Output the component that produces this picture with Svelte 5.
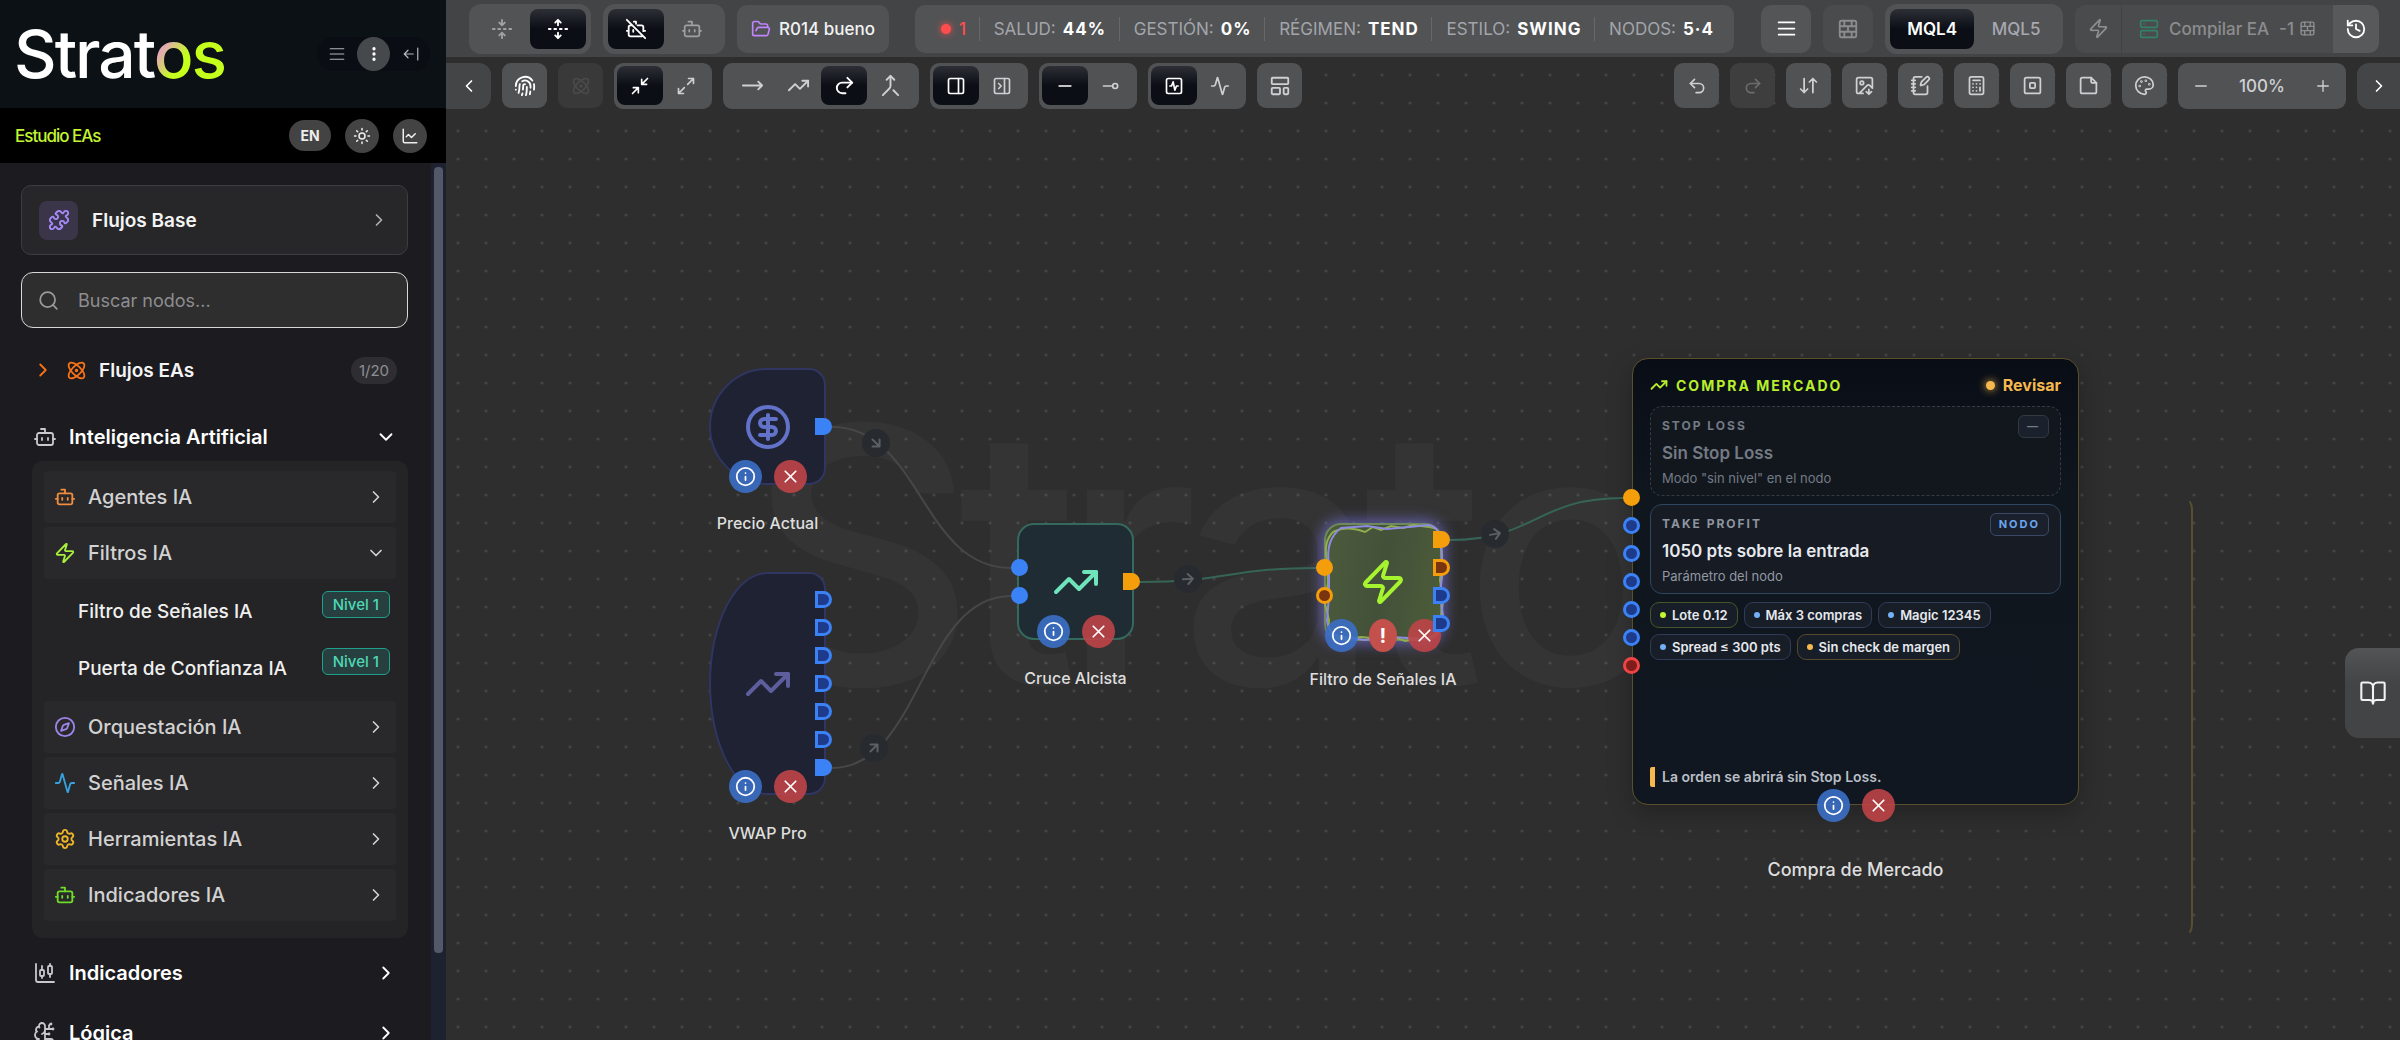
<script>
    const icons = {
        menu: '<path d="M3 5h18M3 12h18M3 19h18"/>',
        kebab: '<circle cx="12" cy="5" r="1"/><circle cx="12" cy="12" r="1"/><circle cx="12" cy="19" r="1"/>',
        collapse: '<path d="m8 7-5 5 5 5M3 12h12M21 4v16"/>',
        sun: '<circle cx="12" cy="12" r="4"/><path d="M12 2v2M12 20v2M4.9 4.9l1.4 1.4M17.7 17.7l1.4 1.4M2 12h2M20 12h2M6.3 17.7l-1.4 1.4M19.1 4.9l-1.4 1.4"/>',
        chart: '<path d="M3 3v16a2 2 0 0 0 2 2h16M19 9l-5 5-4-4-3 3"/>',
        puzzle: '<path d="M15.39 4.39a1 1 0 0 0 1.68-.474 2.5 2.5 0 1 1 3.014 3.015 1 1 0 0 0-.474 1.68l1.683 1.682a2.414 2.414 0 0 1 0 3.414L19.61 15.39a1 1 0 0 1-1.68-.474 2.5 2.5 0 1 0-3.014 3.015 1 1 0 0 1 .474 1.68l-1.683 1.682a2.414 2.414 0 0 1-3.414 0L8.61 19.61a1 1 0 0 0-1.68.474 2.5 2.5 0 1 1-3.014-3.015 1 1 0 0 0 .474-1.68l-1.683-1.682a2.414 2.414 0 0 1 0-3.414L4.39 8.61a1 1 0 0 1 1.68.474 2.5 2.5 0 1 0 3.014-3.015 1 1 0 0 1-.474-1.68l1.683-1.682a2.414 2.414 0 0 1 3.414 0z"/>',
        search: '<circle cx="11" cy="11" r="8.5"/><path d="m21.5 21.5-4.5-4.5"/>',
        right: '<path d="m9 18 6-6-6-6"/>',
        left: '<path d="m15 18-6-6 6-6"/>',
        down: '<path d="m6 9 6 6 6-6"/>',
        atom: '<circle cx="12" cy="12" r="1"/><path d="M20.2 20.2c2.04-2.03.02-7.36-4.5-11.9-4.54-4.52-9.87-6.54-11.9-4.5-2.04 2.03-.02 7.36 4.5 11.9 4.54 4.52 9.87 6.54 11.9 4.5Z"/><path d="M15.7 15.7c4.52-4.54 6.54-9.87 4.5-11.9-2.03-2.04-7.36-.02-11.9 4.5-4.52 4.54-6.54 9.87-4.5 11.9 2.03 2.04 7.36.02 11.9-4.5Z"/>',
        bot: '<path d="M12 8V4H8"/><rect width="16" height="12" x="4" y="8" rx="2"/><path d="M2 14h2M20 14h2M15 13v2M9 13v2"/>',
        botOff: '<path d="M13.67 8H18a2 2 0 0 1 2 2v4.33M2 14h2M20 14h2M22 22 2 2M8 8H6a2 2 0 0 0-2 2v8a2 2 0 0 0 2 2h12a2 2 0 0 0 1.414-.586M9 13v2M9.67 4H12v2.33"/>',
        zap: '<path d="M4 14a1 1 0 0 1-.78-1.63l9.9-10.2a.5.5 0 0 1 .86.46l-1.92 6.02A1 1 0 0 0 13 10h7a1 1 0 0 1 .78 1.63l-9.9 10.2a.5.5 0 0 1-.86-.46l1.92-6.02A1 1 0 0 0 11 14z"/>',
        compass: '<circle cx="12" cy="12" r="10"/><path d="m16.24 7.76-1.804 5.411a2 2 0 0 1-1.265 1.265L7.76 16.24l1.804-5.411a2 2 0 0 1 1.265-1.265z"/>',
        activity: '<path d="M22 12h-2.48a2 2 0 0 0-1.93 1.46l-2.35 8.36a.25.25 0 0 1-.48 0L9.24 2.18a.25.25 0 0 0-.48 0l-2.35 8.36A2 2 0 0 1 4.49 12H2"/>',
        settings: '<path d="M9.671 4.136a2.34 2.34 0 0 1 4.659 0 2.34 2.34 0 0 0 3.319 1.915 2.34 2.34 0 0 1 2.33 4.033 2.34 2.34 0 0 0 0 3.831 2.34 2.34 0 0 1-2.33 4.033 2.34 2.34 0 0 0-3.319 1.915 2.34 2.34 0 0 1-4.659 0 2.34 2.34 0 0 0-3.32-1.915 2.34 2.34 0 0 1-2.33-4.033 2.34 2.34 0 0 0 0-3.831A2.34 2.34 0 0 1 6.35 6.051a2.34 2.34 0 0 0 3.319-1.915"/><circle cx="12" cy="12" r="3"/>',
        candles: '<path d="M9 5v4M9 15v2M17 3v2M17 13v3M3 3v16a2 2 0 0 0 2 2h16"/><rect width="4" height="6" x="7" y="9" rx="1"/><rect width="4" height="8" x="15" y="5" rx="1"/>',
        brain: '<path d="M12 5a3 3 0 1 0-5.997.125 4 4 0 0 0-2.526 5.77 4 4 0 0 0 .556 6.588A4 4 0 1 0 12 18ZM9 13a4.5 4.5 0 0 0 3-4M6.003 5.125A3 3 0 0 0 6.401 6.5M3.477 10.896a4 4 0 0 1 .585-.396M6 18a4 4 0 0 1-1.967-.516M12 13h4M12 18h6a2 2 0 0 1 2 2v1M12 8h8M16 8V5a2 2 0 0 1 2-2"/><circle cx="16" cy="13" r=".5"/><circle cx="18" cy="3" r=".5"/><circle cx="20" cy="21" r=".5"/><circle cx="20" cy="8" r=".5"/>',
        fold: '<path d="M12 22v-6M12 8V2M4 12H2M10 12H8M16 12h-2M22 12h-2M15 19l-3-3-3 3M15 5l-3 3-3-3"/>',
        unfold: '<path d="M12 22v-6M12 8V2M4 12H2M10 12H8M16 12h-2M22 12h-2M15 19l-3 3-3-3M15 5l-3-3-3 3"/>',
        folder: '<path d="m6 14 1.5-2.9A2 2 0 0 1 9.24 10H20a2 2 0 0 1 1.94 2.5l-1.54 6a2 2 0 0 1-1.95 1.5H4a2 2 0 0 1-2-2V5a2 2 0 0 1 2-2h3.9a2 2 0 0 1 1.69.9l.81 1.2a2 2 0 0 0 1.67.9H18a2 2 0 0 1 2 2v2"/>',
        finger: '<path d="M12 10a2 2 0 0 0-2 2c0 1.02-.1 2.51-.26 4M14 13.12c0 2.38 0 6.38-1 8.88M17.29 21.02c.12-.6.43-2.3.5-3.02M2 12a10 10 0 0 1 18-6M2 16h.01M21.8 16c.2-2 .131-5.354 0-6M5 19.5C5.5 18 6 15 6 12a6 6 0 0 1 .34-2M8.65 22c.21-.66.45-1.32.57-2M9 6.8a6 6 0 0 1 9 5.2v2"/>',
        shrink: '<path d="m14 10 7-7M20 10h-6V4M3 21l7-7M4 14h6v6"/>',
        grow: '<path d="M15 3h6v6M21 3l-7 7M3 21l7-7M9 21H3v-6"/>',
        arrow: '<path d="m18 8 4 4-4 4M2 12h20"/>',
        trend: '<path d="M16 7h6v6"/><path d="m22 7-8.5 8.5-5-5L2 17"/>',
        redo: '<path d="m15 14 5-5-5-5"/><path d="M20 9H9.5a5.5 5.5 0 0 0 0 11H13"/>',
        undo: '<path d="M9 14 4 9l5-5"/><path d="M4 9h10.5a5.5 5.5 0 0 1 0 11H11"/>',
        merge: '<path d="m8 6 4-4 4 4"/><path d="M12 2v10.3a4 4 0 0 1-1.172 2.872L4 22M20 22l-5-5"/>',
        panel: '<rect width="18" height="18" x="3" y="3" rx="2"/><path d="M15 3v18"/>',
        panelClose: '<rect width="18" height="18" x="3" y="3" rx="2"/><path d="M15 3v18M8 9l3 3-3 3"/>',
        minus: '<path d="M5 12h14"/>',
        plus: '<path d="M5 12h14M12 5v14"/>',
        port: '<path d="M3 12h11"/><circle cx="17" cy="12" r="3"/>',
        pulse: '<rect width="18" height="18" x="3" y="3" rx="2"/><path d="M17 12h-2l-2 5-2-10-2 5H7"/>',
        layout: '<rect width="18" height="7" x="3" y="3" rx="1"/><rect width="9" height="7" x="3" y="14" rx="1"/><rect width="5" height="7" x="16" y="14" rx="1"/>',
        bricks: '<rect width="18" height="18" x="3" y="3" rx="2"/><path d="M12 9v6M16 15v6M16 3v6M3 15h18M3 9h18M8 15v6M8 3v6"/>',
        server: '<rect width="20" height="8" x="2" y="2" rx="2"/><rect width="20" height="8" x="2" y="14" rx="2"/><path d="M6 6h.01M6 18h.01"/>',
        history: '<path d="M3 12a9 9 0 1 0 9-9 9.75 9.75 0 0 0-6.74 2.74L3 8"/><path d="M3 3v5h5M12 7v5l4 2"/>',
        sort: '<path d="m3 16 4 4 4-4M7 20V4M21 8l-4-4-4 4M17 4v16"/>',
        image: '<path d="M10.3 21H5a2 2 0 0 1-2-2V5a2 2 0 0 1 2-2h14a2 2 0 0 1 2 2v10l-3.1-3.1a2 2 0 0 0-2.814.014L6 21"/><path d="m14 19 3 3v-5.5M17 22l3-3"/><circle cx="9" cy="9" r="2"/>',
        note: '<path d="M13.4 2H6a2 2 0 0 0-2 2v16a2 2 0 0 0 2 2h12a2 2 0 0 0 2-2v-7.4M2 6h4M2 10h4M2 14h4M2 18h4"/><path d="M21.378 5.626a1 1 0 1 0-3.004-3.004l-5.01 5.012a2 2 0 0 0-.506.854l-.837 2.87a.5.5 0 0 0 .62.62l2.87-.837a2 2 0 0 0 .854-.506z"/>',
        calc: '<rect width="16" height="20" x="4" y="2" rx="2"/><path d="M8 6h8M16 14v4M16 10h.01M12 10h.01M8 10h.01M12 14h.01M8 14h.01M12 18h.01M8 18h.01"/>',
        frame: '<rect width="18" height="18" x="3" y="3" rx="2"/><rect width="6" height="6" x="9" y="9" rx="1"/>',
        sticky: '<path d="M15 3H5a2 2 0 0 0-2 2v14a2 2 0 0 0 2 2h14a2 2 0 0 0 2-2V9Z"/><path d="M15 3v4a2 2 0 0 0 2 2h4"/>',
        palette: '<path d="M12 22a1 1 0 0 1 0-20 10 9 0 0 1 10 9 5 5 0 0 1-5 5h-2.25a1.75 1.75 0 0 0-1.4 2.8l.3.4a1.75 1.75 0 0 1-1.4 2.8z"/><circle cx="13.5" cy="6.5" r=".5"/><circle cx="17.5" cy="10.5" r=".5"/><circle cx="6.5" cy="12.5" r=".5"/><circle cx="8.5" cy="7.5" r=".5"/>',
        info: '<circle cx="12" cy="12" r="10"/><path d="M12 16v-4M12 8h.01"/>',
        close: '<path d="M18 6 6 18M6 6l12 12"/>',
        dollar: '<circle cx="12" cy="12" r="10"/><path d="M16 8h-6a2 2 0 1 0 0 4h4a2 2 0 1 1 0 4H8M12 18V6"/>',
        book: '<path d="M12 7v14"/><path d="M3 18a1 1 0 0 1-1-1V4a1 1 0 0 1 1-1h5a4 4 0 0 1 4 4 4 4 0 0 1 4-4h5a1 1 0 0 1 1 1v13a1 1 0 0 1-1 1h-6a3 3 0 0 0-3 3 3 3 0 0 0-3-3z"/>'
    };

    const categories = [
        { name: "Agentes IA", icon: "bot", tone: "orange" },
        { name: "Filtros IA", icon: "zap", tone: "lime", items: ["Filtro de Señales IA", "Puerta de Confianza IA"] },
        { name: "Orquestación IA", icon: "compass", tone: "violet" },
        { name: "Señales IA", icon: "activity", tone: "sky" },
        { name: "Herramientas IA", icon: "settings", tone: "amber" },
        { name: "Indicadores IA", icon: "bot", tone: "green" }
    ];

    const stats = [
        { label: "SALUD:", value: "44%" },
        { label: "GESTIÓN:", value: "0%" },
        { label: "RÉGIMEN:", value: "TEND" },
        { label: "ESTILO:", value: "SWING" },
        { label: "NODOS:", value: "5·4" }
    ];

    const viewGroups = [
        { active: 0, icons: ["shrink", "grow"] },
        { active: 2, icons: ["arrow", "trend", "redo", "merge"], wide: true },
        { active: 0, icons: ["panel", "panelClose"] },
        { active: 0, icons: ["minus", "port"] },
        { active: 0, icons: ["pulse", "activity"] }
    ];

    const tools = ["sort", "image", "note", "calc", "frame", "sticky", "palette"];

    // canvas coordinates, origin at the canvas' top left corner
    const nodes = [
        { name: "Precio Actual", kind: "source", icon: "dollar", x: 263, y: 311, w: 117, h: 117 },
        { name: "VWAP Pro", kind: "source faded", icon: "trend", x: 263, y: 515, w: 117, h: 223 },
        { name: "Cruce Alcista", kind: "cross", icon: "trend", x: 571, y: 466, w: 117, h: 117 },
        { name: "Filtro de Señales IA", kind: "filter", icon: "zap", x: 878, y: 466, w: 118, h: 118, alert: true }
    ];

    const ports = [
        { x: 369, y: 361, c: "out blue full" },
        ...[534, 562, 590, 618, 646, 674].map(y => ({ x: 369, y, c: "out blue" })),
        { x: 369, y: 702, c: "out blue full" },
        { x: 565, y: 502, c: "blue full" },
        { x: 565, y: 530, c: "blue full" },
        { x: 677, y: 516, c: "out gold full" },
        { x: 870, y: 502, c: "gold full" },
        { x: 870, y: 530, c: "gold" },
        { x: 987, y: 474, c: "out gold full" },
        { x: 987, y: 502, c: "out gold" },
        { x: 987, y: 530, c: "out blue" },
        { x: 987, y: 558, c: "out blue" },
        { x: 1177, y: 432, c: "gold full" },
        ...[460, 488, 516, 544, 572].map(y => ({ x: 1177, y, c: "blue" })),
        { x: 1177, y: 600, c: "red" }
    ];

    const edges = [
        { d: "M386 370C475 370 475 511 565 511", c: "plain", x: 430, y: 386, turn: 45 },
        { d: "M386 711C475 711 475 539 565 539", c: "plain", x: 428, y: 691, turn: -45 },
        { d: "M694 525C782 525 782 511 870 511", c: "live", x: 742, y: 522, turn: -4 },
        { d: "M1004 483C1090 483 1090 441 1177 441", c: "live", x: 1049, y: 477, turn: -10 }
    ];

    const chips = [
        { text: "Lote 0.12", tone: "lime" },
        { text: "Máx 3 compras", tone: "blue" },
        { text: "Magic 12345", tone: "blue" },
        { text: "Spread ≤ 300 pts", tone: "blue" },
        { text: "Sin check de margen", tone: "gold" }
    ];
</script>

{#snippet icon(name, size = 20, stroke = 2)}
    <svg class="icon" width={size} height={size} viewBox="0 0 24 24" stroke-width={stroke} aria-hidden="true">{@html icons[name]}</svg>
{/snippet}

{#snippet actions(alert)}
    <div class="actions">
        <button class="round info" aria-label="Información">{@render icon("info", 21)}</button>
        {#if alert}
            <button class="round alert" aria-label="Aviso">!</button>
        {/if}
        <button class="round remove" aria-label="Eliminar">{@render icon("close", 21)}</button>
    </div>
{/snippet}

<div class="app">
    <aside class="sidebar">
        <header class="brand">
            <h1 class="logo">Strat<span>os</span></h1>
            <div class="brand-actions">
                <button aria-label="Menú">{@render icon("menu", 18, 1.6)}</button>
                <button class="on" aria-label="Opciones">{@render icon("kebab", 18, 2.4)}</button>
                <button aria-label="Contraer">{@render icon("collapse", 18, 1.6)}</button>
            </div>
        </header>

        <div class="studio">
            <span class="studio-name">Estudio EAs</span>
            <div class="studio-actions">
                <button class="lang">EN</button>
                <button aria-label="Tema">{@render icon("sun", 18)}</button>
                <button aria-label="Gráfico">{@render icon("chart", 18)}</button>
            </div>
        </div>

        <div class="scroller">
            <nav class="nav">
                <button class="base">
                    <span class="base-icon">{@render icon("puzzle", 22)}</span>
                    <span class="grow">Flujos Base</span>
                    {@render icon("right", 20)}
                </button>

                <label class="search">
                    {@render icon("search", 21, 2)}
                    <input type="text" placeholder="Buscar nodos..." aria-label="Buscar nodos" />
                </label>

                <button class="flows">
                    {@render icon("right", 22)}
                    {@render icon("atom", 21)}
                    <span class="grow">Flujos EAs</span>
                    <span class="count">1/20</span>
                </button>

                <button class="section">
                    {@render icon("bot", 24, 1.8)}
                    <span class="grow">Inteligencia Artificial</span>
                    {@render icon("down", 22)}
                </button>

                <div class="panel">
                    {#each categories as cat}
                        <button class="category">
                            <span class="tone {cat.tone}">{@render icon(cat.icon, 22)}</span>
                            <span class="grow">{cat.name}</span>
                            {@render icon(cat.items ? "down" : "right", 20)}
                        </button>
                        {#if cat.items}
                            <div class="leafs">
                                {#each cat.items as item}
                                    <button class="leaf">
                                        <span class="grow">{item}</span>
                                        <span class="level">Nivel 1</span>
                                    </button>
                                {/each}
                            </div>
                        {/if}
                    {/each}
                </div>

                <button class="section">
                    {@render icon("candles", 24, 1.8)}
                    <span class="grow">Indicadores</span>
                    {@render icon("right", 22)}
                </button>
                <button class="section">
                    {@render icon("brain", 24, 1.8)}
                    <span class="grow">Lógica</span>
                    {@render icon("right", 22)}
                </button>
            </nav>
            <div class="track"><div class="thumb"></div></div>
        </div>
    </aside>

    <main class="main">
        <header class="topbar">
            <div class="toggle">
                <button aria-label="Plegar">{@render icon("fold", 22)}</button>
                <button class="on" aria-label="Desplegar">{@render icon("unfold", 22)}</button>
            </div>
            <div class="toggle">
                <button class="on" aria-label="Sin asistente">{@render icon("botOff", 22)}</button>
                <button aria-label="Asistente">{@render icon("bot", 22, 1.8)}</button>
            </div>
            <button class="project">{@render icon("folder", 20)} R014 bueno</button>

            <div class="status">
                <span class="errors"><i></i>1</span>
                {#each stats as stat}
                    <span class="stat">{stat.label} <b>{stat.value}</b></span>
                {/each}
            </div>

            <button class="single" aria-label="Lista">{@render icon("menu", 21)}</button>
            <button class="single dim" aria-label="Bloques">{@render icon("bricks", 22)}</button>
            <div class="toggle platform">
                <button class="on">MQL4</button>
                <button>MQL5</button>
            </div>
            <div class="compile">
                <button class="quick" aria-label="Rápido">{@render icon("zap", 21)}</button>
                <button class="build">
                    <span class="server">{@render icon("server", 20)}</span>
                    Compilar EA
                    <span class="cost">-1 {@render icon("bricks", 17)}</span>
                </button>
                <button class="past" aria-label="Historial">{@render icon("history", 22)}</button>
            </div>
        </header>

        <section class="canvas">
            <div class="watermark" aria-hidden="true">Stratos</div>

            <svg class="edges" aria-hidden="true">
                {#each edges as edge}
                    <path class={edge.c} d={edge.d} />
                    <g transform="translate({edge.x} {edge.y}) rotate({edge.turn})">
                        <circle r="14" />
                        <path class="tip" d="M-5 0H5M0-5 5 0 0 5" />
                    </g>
                {/each}
                <path class="ghost" d="M1744 445Q1746 448 1746 452V867Q1746 872 1744 875" />
            </svg>

            {#each nodes as node}
                <div
                    class="node {node.kind}"
                    style="left: {node.x}px; top: {node.y}px; width: {node.w}px; height: {node.h}px;">
                    {@render icon(node.icon, 48)}
                    {#if node.alert}
                        <svg class="spark" viewBox="0 0 125 125" aria-hidden="true">
                            <path class="lime" d="M6 40Q2 22 12 12 24 6 38 10L44 12 52 7 60 10 70 6 82 8 92 5 108 7Q120 8 120 20L121 42 119 60 122 80 120 100Q119 117 104 118L84 121 76 118 60 119 40 117 22 119Q6 117 8 100L4 84 7 62Z" />
                            <path class="purple" d="M8 44Q4 20 20 8L46 6 66 9 88 7 108 5Q121 9 120 24L122 50 119 72 122 96Q120 116 104 119L70 117 44 120 22 117Q7 115 6 100L8 76Z" />
                        </svg>
                    {/if}
                    {@render actions(node.alert)}
                    <span class="node-name">{node.name}</span>
                </div>
            {/each}

            <article class="card">
                <header class="card-head">
                    <span class="card-title">{@render icon("trend", 18, 2.4)} COMPRA MERCADO</span>
                    <span class="review"><i></i>Revisar</span>
                </header>
                <div class="level-box off">
                    <div class="level-head"><span>STOP LOSS</span><span class="tag">—</span></div>
                    <strong>Sin Stop Loss</strong>
                    <small>Modo "sin nivel" en el nodo</small>
                </div>
                <div class="level-box">
                    <div class="level-head"><span>TAKE PROFIT</span><span class="tag">NODO</span></div>
                    <strong>1050 pts sobre la entrada</strong>
                    <small>Parámetro del nodo</small>
                </div>
                <div class="chips">
                    {#each chips as chip}
                        <span class="chip {chip.tone}"><i></i>{chip.text}</span>
                    {/each}
                </div>
                <p class="warning">La orden se abrirá sin Stop Loss.</p>
                {@render actions(false)}
                <span class="node-name">Compra de Mercado</span>
            </article>

            {#each ports as port}
                <span class="port {port.c}" style="left: {port.x}px; top: {port.y}px;"></span>
            {/each}

            <div class="toolbar">
                <button class="edge-tab start" aria-label="Anterior">{@render icon("left", 20)}</button>
                <button class="tool bright" aria-label="Identidad">{@render icon("finger", 22)}</button>
                <button class="tool ghosted" aria-label="Átomo">{@render icon("atom", 20)}</button>
                {#each viewGroups as group}
                    <div class="segment" class:wide={group.wide}>
                        {#each group.icons as name, i}
                            <button class:on={i === group.active} aria-label={name}>
                                {@render icon(name, group.wide ? 23 : 20)}
                            </button>
                        {/each}
                    </div>
                {/each}
                <button class="tool" aria-label="Distribución">{@render icon("layout", 22)}</button>

                <button class="tool push" aria-label="Deshacer">{@render icon("undo", 20)}</button>
                <button class="tool ghosted redo" aria-label="Rehacer">{@render icon("redo", 20)}</button>
                {#each tools as tool}
                    <button class="tool" aria-label={tool}>{@render icon(tool, 21)}</button>
                {/each}
                <div class="zoom">
                    <button aria-label="Alejar">{@render icon("minus", 18, 1.8)}</button>
                    <span>100%</span>
                    <button aria-label="Acercar">{@render icon("plus", 18, 1.8)}</button>
                </div>
                <button class="edge-tab end" aria-label="Siguiente">{@render icon("right", 20)}</button>
            </div>

            <button class="guide" aria-label="Guía">{@render icon("book", 28, 1.8)}</button>
        </section>
    </main>
</div>

<style>
    :global(body) {
        background: #2e2e2e;
        font-family: Inter, "Liberation Sans", sans-serif;
    }

    button {
        display: flex;
        align-items: center;
        justify-content: center;
        margin: 0;
        padding: 0;
        border: 0;
        background: none;
        color: inherit;
        font: inherit;
        cursor: pointer;
    }

    .icon {
        display: block;
        flex: none;
        fill: none;
        stroke: currentColor;
        stroke-linecap: round;
        stroke-linejoin: round;
    }

    .grow {
        flex: 1;
        text-align: left;
    }

    .app {
        display: flex;
        height: 100vh;
        overflow: hidden;
    }

    /* sidebar */
    .sidebar {
        display: flex;
        flex: none;
        flex-direction: column;
        width: 446px;
        background: #1b1b20;
        color: #fff;
    }

    .brand {
        display: flex;
        flex: none;
        align-items: center;
        justify-content: space-between;
        height: 108px;
        padding: 0 16px 0 14px;
        background: #0c1116;
    }

    .logo {
        margin: 0;
        font-size: 66px;
        font-weight: 500;
        letter-spacing: -2px;
        line-height: 80px;
    }

    .logo span {
        background: linear-gradient(125deg, #e3a9b4 26%, #c5ff1c 48%);
        background-clip: text;
        color: transparent;
    }

    .brand-actions {
        display: flex;
        gap: 4px;
        padding: 0 3px;
        border-radius: 20px;
        background: #0a0d13;
        color: #b4b8bc;
    }

    .brand-actions button {
        width: 33px;
        height: 34px;
        border-radius: 50%;
    }

    .brand-actions .on {
        background: #45494c;
        color: #fff;
    }

    .studio {
        display: flex;
        flex: none;
        align-items: center;
        justify-content: space-between;
        height: 55px;
        padding: 0 19px 0 15px;
        background: #000;
    }

    .studio-name {
        color: #c3f531;
        font-size: 17px;
        font-weight: 500;
        letter-spacing: -1px;
    }

    .studio-actions {
        display: flex;
        align-items: center;
        gap: 14px;
    }

    .studio-actions button {
        width: 34px;
        height: 34px;
        border-radius: 17px;
        background: #434343;
        color: #eee;
    }

    .studio-actions .lang {
        width: 42px;
        height: 31px;
        font-size: 14px;
        font-weight: 700;
    }

    .scroller {
        display: flex;
        flex: 1;
        min-height: 0;
    }

    .nav {
        flex: 1;
        padding: 22px 23px 0 21px;
        overflow: hidden;
    }

    .track {
        width: 15px;
        padding-top: 4px;
        background: #1d2130;
    }

    .thumb {
        width: 9px;
        height: 90%;
        margin: 0 auto;
        border-radius: 4px;
        background: #545868;
    }

    .base {
        width: 100%;
        height: 70px;
        gap: 14px;
        padding: 0 18px 0 17px;
        border: 1px solid #3d3d40;
        border-radius: 10px;
        background: #272729;
        color: #b0b0b0;
        font-size: 19px;
        font-weight: 600;
    }

    .base .grow {
        color: #f4f4f4;
    }

    .base-icon {
        display: grid;
        place-items: center;
        width: 39px;
        height: 39px;
        border-radius: 8px;
        background: #3b3549;
        color: #a78bfa;
    }

    .search {
        display: flex;
        align-items: center;
        gap: 19px;
        height: 54px;
        margin-top: 17px;
        padding: 0 17px 0 16px;
        border: 1px solid #d8d8d8;
        border-radius: 12px;
        background: #2e2e2e;
        color: #9a9a9a;
    }

    .search input {
        flex: 1;
        min-width: 0;
        padding: 0;
        border: 0;
        outline: 0;
        background: none;
        color: #fff;
        font: inherit;
        font-size: 18px;
    }

    .search input::placeholder {
        color: #8d8d90;
    }

    .flows {
        width: 100%;
        height: 44px;
        gap: 12px;
        margin-top: 20px;
        padding: 0 11px;
        color: #f97316;
        font-size: 19px;
        font-weight: 600;
    }

    .flows .grow {
        color: #f4f4f4;
    }

    .count {
        padding: 0 8px;
        border-radius: 14px;
        background: #2e2e32;
        color: #8f8f92;
        font-size: 15px;
        font-weight: 400;
        line-height: 27px;
    }

    .section {
        width: 100%;
        height: 60px;
        gap: 12px;
        padding: 0 11px 0 12px;
        font-size: 20px;
        font-weight: 600;
    }

    .section :global(.icon:first-child) {
        color: #c9c9cc;
    }

    .flows + .section {
        margin-top: 15px;
    }

    .panel {
        display: flex;
        flex-direction: column;
        gap: 4px;
        margin: -6px 0 5px 11px;
        padding: 10px 12px 17px;
        border-radius: 10px;
        background: #242426;
    }

    .category {
        height: 52px;
        gap: 12px;
        padding: 0 10px;
        border-radius: 4px;
        background: #29292b;
        color: #d2d2d2;
        font-size: 20px;
        font-weight: 500;
    }

    .leafs {
        display: flex;
        flex-direction: column;
        padding-left: 20px;
    }

    .leaf {
        height: 57px;
        padding: 0 6px 0 14px;
        color: #f0f0f0;
        font-size: 19px;
        font-weight: 500;
    }

    .level {
        align-self: flex-start;
        margin-top: 8px;
        padding: 0 10px;
        border: 1px solid #1fa08c;
        border-radius: 6px;
        background: #27403f;
        color: #4fd8b6;
        font-size: 15px;
        line-height: 25px;
    }

    .tone.orange { color: #f08c3c; }
    .tone.lime { color: #a8f03c; }
    .tone.violet { color: #9d84e8; }
    .tone.sky { color: #36a3e0; }
    .tone.amber { color: #f0b429; }
    .tone.green { color: #6fdc28; }

    /* top bar */
    .main {
        display: flex;
        flex: 1;
        flex-direction: column;
        min-width: 0;
    }

    .topbar {
        display: flex;
        flex: none;
        align-items: center;
        gap: 12px;
        height: 57px;
        padding: 0 21px 0 23px;
        background: #434445;
        color: #fff;
        font-size: 17px;
        font-weight: 500;
        white-space: nowrap;
    }

    .toggle {
        display: flex;
        padding: 5px;
        border-radius: 12px;
        background: #525355;
        color: #a0a1a3;
    }

    .toggle button {
        width: 56px;
        height: 40px;
        border-radius: 8px;
    }

    .toggle .on,
    .segment .on {
        background: linear-gradient(#2c3036, #0b0f15 50%);
        color: #fff;
    }

    .toggle.platform button {
        width: 84px;
        color: #a7a8b0;
    }

    .toggle.platform .on {
        color: #fff;
        font-weight: 600;
    }

    .project {
        height: 48px;
        gap: 8px;
        padding: 0 14px;
        border-radius: 10px;
        background: #515254;
        color: #f2f2f2;
    }

    .project :global(.icon) {
        color: #c084fc;
    }

    .status {
        display: flex;
        flex: 1;
        align-items: center;
        justify-content: space-between;
        height: 48px;
        margin: 0 15px 0 14px;
        padding: 0 20px 0 26px;
        border-radius: 10px;
        background: #525355;
    }

    .errors {
        display: flex;
        align-items: center;
        gap: 8px;
        color: #ff4d4d;
    }

    .errors i {
        width: 10px;
        height: 10px;
        border-radius: 50%;
        background: #ff4d4d;
        box-shadow: 0 0 7px #ff4d4d;
    }

    .stat {
        display: flex;
        align-items: center;
        gap: 7px;
        height: 24px;
        padding-left: 14px;
        border-left: 1px solid #67686a;
        color: #a2a5aa;
        font-weight: 400;
    }

    .stat b {
        color: #fff;
        font-weight: 700;
        letter-spacing: 1px;
    }

    .single {
        width: 50px;
        height: 48px;
        border-radius: 10px;
        background: #545557;
    }

    .single.dim {
        background: #4a4b4d;
        color: #8c8d8f;
    }

    .compile {
        display: flex;
        height: 48px;
        border-radius: 10px;
        background: #4a4b4d;
        color: #8c8d8f;
        overflow: hidden;
    }

    .quick {
        width: 46px;
    }

    .build {
        gap: 10px;
        padding: 0 17px;
        border-left: 1px solid #414244;
    }

    .server {
        color: #348068;
    }

    .cost {
        display: flex;
        align-items: center;
        gap: 5px;
    }

    .past {
        width: 46px;
        background: #58595b;
        color: #fff;
    }

    /* canvas */
    .canvas {
        position: relative;
        flex: 1;
        min-height: 0;
        overflow: hidden;
        background: #2e2e2e radial-gradient(circle, #444 1px, transparent 2px) -2px 4px / 28px 28px;
    }

    .watermark {
        position: absolute;
        inset: 0;
        display: flex;
        align-items: center;
        padding: 12px 0 0 300px;
        color: rgba(255, 255, 255, .03);
        font-size: 356px;
        font-weight: 500;
        letter-spacing: -18px;
    }

    .toolbar {
        position: relative;
        display: flex;
        gap: 11px;
        padding-top: 6px;
        color: #cfd0d2;
    }

    .tool {
        flex: none;
        width: 45px;
        height: 45px;
        border-radius: 9px;
        background: #515254;
    }

    .tool.bright {
        color: #fff;
    }

    .tool.ghosted {
        background: #393939;
        color: #4a4a4a;
    }

    .tool.redo {
        background: #3e3e3f;
        color: #6c6c6d;
    }

    .push {
        margin-left: auto;
    }

    .segment {
        display: flex;
        padding: 3px;
        border-radius: 9px;
        background: #515254;
    }

    .segment.wide {
        padding: 3px 6px;
    }

    .segment button {
        width: 46px;
        height: 39px;
        border-radius: 8px;
    }

    .zoom {
        box-sizing: border-box;
        display: flex;
        align-items: center;
        justify-content: space-between;
        width: 168px;
        padding: 0 14px;
        border-radius: 9px;
        background: #515254;
        font-size: 17px;
        font-weight: 500;
    }

    .edge-tab {
        width: 45px;
        height: 46px;
        background: #444546;
        color: #fff;
    }

    .edge-tab.start {
        border-radius: 0 12px 12px 0;
    }

    .edge-tab.end {
        width: 43px;
        border-radius: 12px 0 0 12px;
    }

    .edges {
        position: absolute;
        inset: 0;
        width: 100%;
        height: 100%;
        fill: none;
        stroke-width: 2px;
        stroke-linecap: round;
        stroke-linejoin: round;
    }

    .edges .plain { stroke: #474747; }
    .edges .live { stroke: #366557; }
    .edges circle { fill: #272a2e; }
    .edges .tip { stroke: #5c6065; }
    .edges .ghost { stroke: #57502f; }

    .node {
        position: absolute;
        box-sizing: border-box;
        display: grid;
        place-items: center;
        border: 2px solid;
        border-radius: 17px;
    }

    .source {
        border-color: #303561;
        border-radius: 50% 17px 17px 50%;
        background: #1e2232;
        color: #6272c8;
    }

    .source.faded {
        color: #5f5e9d;
    }

    .cross {
        border-color: #35695d;
        background: #1f2c33;
        color: #6fe3ba;
    }

    .filter {
        border-color: #6c8a5e;
        background: linear-gradient(100deg, #4c5a3c, #43513a 50%, #4c5d38);
        box-shadow: 0 0 14px 3px rgba(124, 118, 230, .65);
        color: #a6f42f;
    }

    .spark {
        position: absolute;
        width: 125px;
        height: 125px;
        fill: none;
        stroke-width: 2px;
    }

    .spark .lime { stroke: #8fae4e; }
    .spark .purple { stroke: #8f8be0; }

    .actions {
        position: absolute;
        bottom: -10px;
        display: flex;
        gap: 12px;
    }

    .filter .actions {
        bottom: -13px;
        gap: 11px;
    }

    .round {
        width: 33px;
        height: 33px;
        border-radius: 50%;
        color: #fff;
    }

    .info { background: rgba(59, 111, 199, .9); }
    .remove { background: rgba(190, 68, 72, .9); }

    .alert {
        width: 28px;
        background: #c4504c;
        font-size: 20px;
        font-weight: 700;
    }

    .node-name {
        position: absolute;
        top: 100%;
        margin-top: 30px;
        color: #dedede;
        font-size: 16px;
        font-weight: 500;
        line-height: 20px;
        white-space: nowrap;
    }

    .port {
        position: absolute;
        box-sizing: border-box;
        width: 17px;
        height: 17px;
        border: 3px solid;
        border-radius: 50%;
    }

    .port.out {
        border-radius: 0 9px 9px 0;
    }

    .port.blue { border-color: #3b82f6; background: #1e3a8a; }
    .port.gold { border-color: #f59e0b; background: #78350f; }
    .port.red { border-color: #ef4444; background: #7f1d1d; }
    .port.blue.full { background: #3b82f6; }
    .port.gold.full { background: #f59e0b; }

    .card {
        position: absolute;
        left: 1186px;
        top: 301px;
        box-sizing: border-box;
        display: flex;
        flex-direction: column;
        width: 447px;
        height: 447px;
        padding: 14px 17px;
        border: 1px solid #5b4f2b;
        border-radius: 16px;
        background: linear-gradient(#090d16, #0f161e 30%, #101720);
        box-shadow: 0 8px 24px rgba(0, 0, 0, .25);
        color: #e6e9ee;
    }

    .card-head {
        display: flex;
        align-items: center;
        justify-content: space-between;
        height: 24px;
        margin-bottom: 9px;
        font-size: 16px;
        font-weight: 700;
    }

    .card-title {
        display: flex;
        align-items: center;
        gap: 8px;
        color: #b9ee2c;
        font-size: 14px;
        letter-spacing: 2px;
    }

    .review {
        display: flex;
        align-items: center;
        gap: 8px;
        color: #f6b94e;
    }

    .review i {
        width: 9px;
        height: 9px;
        border-radius: 50%;
        background: #f6b94e;
        box-shadow: 0 0 8px #f6b94e;
    }

    .level-box {
        display: flex;
        flex-direction: column;
        margin-bottom: 8px;
        padding: 8px 11px;
        border: 1px solid #2f4560;
        border-radius: 12px;
        background: #161b24;
    }

    .level-box.off {
        border: 1px dashed #363b43;
        background: #12171e;
    }

    .level-head {
        display: flex;
        justify-content: space-between;
        height: 23px;
        color: #8f959f;
        font-size: 12px;
        font-weight: 700;
        letter-spacing: 2px;
        line-height: 22px;
    }

    .tag {
        box-sizing: border-box;
        padding: 0 8px;
        border: 1px solid #3a4a66;
        border-radius: 6px;
        background: #1a212c;
        color: #6ba5ee;
        font-size: 11px;
        line-height: 20px;
    }

    .level-box strong {
        margin-top: 5px;
        font-size: 17px;
        font-weight: 600;
        line-height: 20px;
    }

    .level-box small {
        margin-top: 6px;
        color: #9298a2;
        font-size: 13px;
        line-height: 18px;
    }

    .off .level-head,
    .off strong,
    .off small {
        color: #747a84;
    }

    .off .tag {
        border-color: #34383f;
        color: #747a84;
    }

    .chips {
        display: flex;
        flex-wrap: wrap;
        gap: 6px;
    }

    .chip {
        display: flex;
        align-items: center;
        gap: 6px;
        padding: 0 9px;
        border: 1px solid #2e3c58;
        border-radius: 9px;
        background: #181e27;
        font-size: 13px;
        font-weight: 600;
        line-height: 24px;
    }

    .chip i {
        width: 6px;
        height: 6px;
        border-radius: 50%;
        background: #74b0f5;
    }

    .chip.lime { border-color: #46562a; }
    .chip.lime i { background: #c3f531; }
    .chip.gold { border-color: #57492e; }
    .chip.gold i { background: #f6b94e; }

    .warning {
        margin: auto 0 3px;
        padding-left: 7px;
        border-left: 5px solid #f6b94e;
        border-radius: 2px;
        color: #b9bec6;
        font-size: 14px;
        font-weight: 600;
        line-height: 20px;
    }

    .card .actions {
        bottom: -18px;
        left: 50%;
        translate: -50%;
    }

    .card .node-name {
        left: 50%;
        margin-top: 54px;
        font-size: 18px;
        line-height: 24px;
        translate: -50%;
    }

    .guide {
        position: absolute;
        top: 591px;
        right: 0;
        width: 55px;
        height: 90px;
        border-radius: 14px 0 0 14px;
        background: linear-gradient(#535455, #434445 40%);
        color: #f2f2f2;
    }
</style>
